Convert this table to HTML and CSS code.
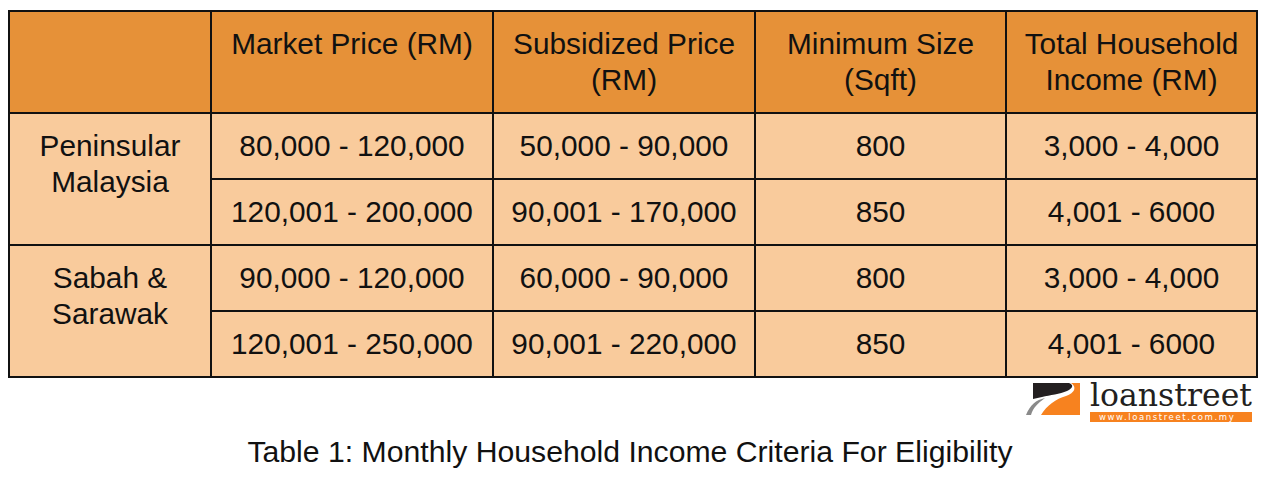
FILE: index.html
```html
<!DOCTYPE html>
<html>
<head>
<meta charset="utf-8">
<link rel="stylesheet" href="styles.css">
</head>
<body>
<div class="page">
  <table class="criteria">
    <colgroup>
      <col class="c1"><col class="c2"><col class="c3"><col class="c4"><col class="c5">
    </colgroup>
    <thead>
      <tr class="head">
        <th></th>
        <th>Market Price (RM)</th>
        <th>Subsidized Price<br>(RM)</th>
        <th>Minimum Size<br>(Sqft)</th>
        <th>Total Household<br>Income (RM)</th>
      </tr>
    </thead>
    <tbody>
      <tr>
        <td rowspan="2" class="region">Peninsular<br>Malaysia</td>
        <td>80,000 - 120,000</td>
        <td>50,000 - 90,000</td>
        <td>800</td>
        <td>3,000 - 4,000</td>
      </tr>
      <tr>
        <td>120,001 - 200,000</td>
        <td>90,001 - 170,000</td>
        <td>850</td>
        <td>4,001 - 6000</td>
      </tr>
      <tr>
        <td rowspan="2" class="region">Sabah &amp;<br>Sarawak</td>
        <td>90,000 - 120,000</td>
        <td>60,000 - 90,000</td>
        <td>800</td>
        <td>3,000 - 4,000</td>
      </tr>
      <tr>
        <td>120,001 - 250,000</td>
        <td>90,001 - 220,000</td>
        <td>850</td>
        <td>4,001 - 6000</td>
      </tr>
    </tbody>
  </table>

  <div class="logo-row">
    <div class="logo">
      <svg class="logo-mark" width="60" height="42" viewBox="0 0 60 42">
        <path d="M13 5 L49 5 C54 7 53 10 47 13 C40 16 30 17 22 19 L13 21 Z" fill="#231f20"/>
        <path d="M51 5 L60 5 L60 37 L21 37 C27 27 36 21 46 18 C55 15 57 9 51 5 Z" fill="#f7821f"/>
        <path d="M6 37 C10 27 16 22 25 20 C18 25 13 30 11 37 Z" fill="#8a8a8a"/>
      </svg>
      <div class="logo-text">
        <span class="brand">loanstreet</span>
        <span class="url">www.loanstreet.com.my</span>
      </div>
    </div>
  </div>

  <p class="caption">Table 1: Monthly Household Income Criteria For Eligibility</p>
</div>
</body>
</html>
```

FILE: styles.css
```css
html, body {
  margin: 0;
  padding: 0;
  background: #ffffff;
}

.page {
  padding: 10px 8px 0 8px;
  font-family: "Liberation Sans", Arial, sans-serif;
  color: #111111;
}

.criteria {
  width: 1248px;
  table-layout: fixed;
  border-collapse: collapse;
  border: 2px solid #111111;
}

.c1 { width: 202px; }
.c2 { width: 282px; }
.c3 { width: 262px; }
.c4 { width: 251px; }
.c5 { width: 251px; }

.criteria th,
.criteria td {
  border: 2px solid #111111;
  text-align: center;
  vertical-align: middle;
  font-size: 29.8px;
  line-height: 36px;
  font-weight: normal;
  padding: 0;
}

.criteria th {
  background: #e69138;
  height: 102px;
  vertical-align: top;
  padding-top: 14px;
  box-sizing: border-box;
}

.criteria td {
  background: #f9cb9c;
  height: 64px;
}

.criteria td.region {
  vertical-align: top;
  padding-top: 14px;
}

.logo-row {
  display: flex;
  justify-content: flex-end;
  padding-right: 4px;
  margin-top: 0px;
}

.logo {
  display: flex;
  align-items: flex-start;
}

.logo-mark {
  display: block;
  margin-right: 10px;
}

.logo-text {
  display: flex;
  flex-direction: column;
  width: 162px;
}

.brand {
  font-family: "DejaVu Serif", "Liberation Serif", serif;
  font-size: 31.5px;
  line-height: 34px;
  color: #231f20;
  height: 34px;
  white-space: nowrap;
}

.url {
  background: #f7821f;
  color: #ffffff;
  font-family: "DejaVu Sans", sans-serif;
  font-size: 8.5px;
  line-height: 10px;
  height: 10px;
  letter-spacing: 1.6px;
  padding-left: 9px;
}

.caption {
  margin: 13px 0 0 0;
  text-align: center;
  font-size: 30.2px;
  line-height: 34px;
  padding-right: 4px;
}
```
